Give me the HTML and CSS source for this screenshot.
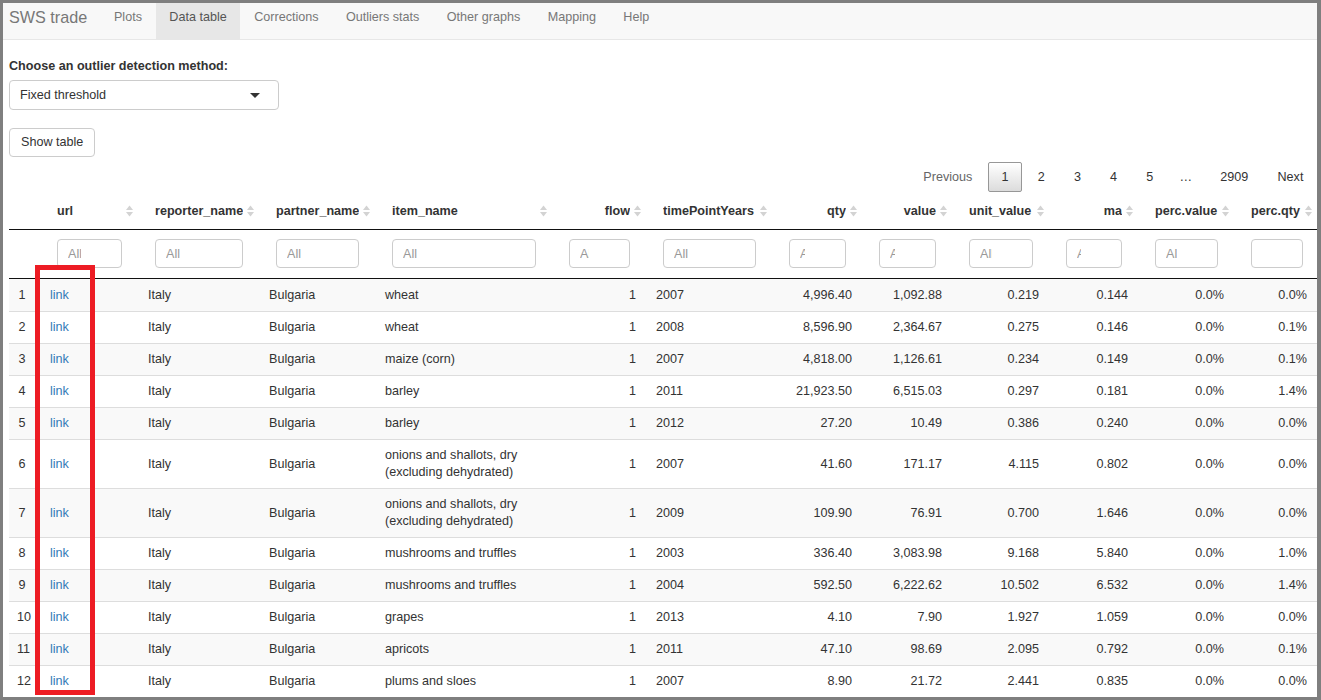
FILE: index.html
```html
<!DOCTYPE html>
<html>
<head>
<meta charset="utf-8">
<link rel="stylesheet" href="styles.css">
</head>
<body>
<div class="frame">
  <nav class="navbar">
    <span class="brand">SWS trade</span>
    <ul class="nav">
      <li><a>Plots</a></li>
      <li class="active"><a>Data table</a></li>
      <li><a>Corrections</a></li>
      <li><a>Outliers stats</a></li>
      <li><a>Other graphs</a></li>
      <li><a>Mapping</a></li>
      <li><a>Help</a></li>
    </ul>
  </nav>
  <main class="content">
    <label class="ctl-label">Choose an outlier detection method:</label>
    <div class="select"><span>Fixed threshold</span><span class="caret"></span></div>
    <button class="btn">Show table</button>
    <div class="pager">
      <span class="pbtn disabled">Previous</span>
      <span class="pbtn current">1</span>
      <span class="pbtn">2</span>
      <span class="pbtn">3</span>
      <span class="pbtn">4</span>
      <span class="pbtn">5</span>
      <span class="ellipsis">…</span>
      <span class="pbtn">2909</span>
      <span class="pbtn">Next</span>
    </div>
    <table class="dt">
      <colgroup>
        <col class="w-idx"><col class="w-url"><col class="w-rep"><col class="w-par"><col class="w-item"><col class="w-flow"><col class="w-time"><col class="w-qty"><col class="w-val"><col class="w-unit"><col class="w-ma"><col class="w-pv"><col class="w-pq">
      </colgroup>
      <thead>
        <tr class="hdr">
          <th></th>
          <th><div class="hd"><span class="t">url</span><svg class="si" viewBox="0 0 7 12"><polygon points="0,5 3.5,0.5 7,5"/><polygon points="0,7 3.5,11.5 7,7"/></svg></div></th>
          <th><div class="hd"><span class="t">reporter_name</span><svg class="si" viewBox="0 0 7 12"><polygon points="0,5 3.5,0.5 7,5"/><polygon points="0,7 3.5,11.5 7,7"/></svg></div></th>
          <th><div class="hd"><span class="t">partner_name</span><svg class="si" viewBox="0 0 7 12"><polygon points="0,5 3.5,0.5 7,5"/><polygon points="0,7 3.5,11.5 7,7"/></svg></div></th>
          <th><div class="hd"><span class="t">item_name</span><svg class="si" viewBox="0 0 7 12"><polygon points="0,5 3.5,0.5 7,5"/><polygon points="0,7 3.5,11.5 7,7"/></svg></div></th>
          <th><div class="hd r"><span class="t">flow</span><svg class="si" viewBox="0 0 7 12"><polygon points="0,5 3.5,0.5 7,5"/><polygon points="0,7 3.5,11.5 7,7"/></svg></div></th>
          <th><div class="hd"><span class="t">timePointYears</span><svg class="si" viewBox="0 0 7 12"><polygon points="0,5 3.5,0.5 7,5"/><polygon points="0,7 3.5,11.5 7,7"/></svg></div></th>
          <th><div class="hd r"><span class="t">qty</span><svg class="si" viewBox="0 0 7 12"><polygon points="0,5 3.5,0.5 7,5"/><polygon points="0,7 3.5,11.5 7,7"/></svg></div></th>
          <th><div class="hd r"><span class="t">value</span><svg class="si" viewBox="0 0 7 12"><polygon points="0,5 3.5,0.5 7,5"/><polygon points="0,7 3.5,11.5 7,7"/></svg></div></th>
          <th><div class="hd"><span class="t">unit_value</span><svg class="si" viewBox="0 0 7 12"><polygon points="0,5 3.5,0.5 7,5"/><polygon points="0,7 3.5,11.5 7,7"/></svg></div></th>
          <th><div class="hd r"><span class="t">ma</span><svg class="si" viewBox="0 0 7 12"><polygon points="0,5 3.5,0.5 7,5"/><polygon points="0,7 3.5,11.5 7,7"/></svg></div></th>
          <th><div class="hd"><span class="t">perc.value</span><svg class="si" viewBox="0 0 7 12"><polygon points="0,5 3.5,0.5 7,5"/><polygon points="0,7 3.5,11.5 7,7"/></svg></div></th>
          <th><div class="hd"><span class="t">perc.qty</span><svg class="si" viewBox="0 0 7 12"><polygon points="0,5 3.5,0.5 7,5"/><polygon points="0,7 3.5,11.5 7,7"/></svg></div></th>
        </tr>
        <tr class="flt">
          <td></td>
          <td><input type="text" placeholder="All"></td>
          <td><input type="text" placeholder="All"></td>
          <td><input type="text" placeholder="All"></td>
          <td><input type="text" placeholder="All"></td>
          <td><input type="text" placeholder="All"></td>
          <td><input type="text" placeholder="All"></td>
          <td><input type="text" placeholder="All"></td>
          <td><input type="text" placeholder="All"></td>
          <td><input type="text" placeholder="All"></td>
          <td><input type="text" placeholder="All"></td>
          <td><input type="text" placeholder="All"></td>
          <td><input type="text" placeholder="All"></td>
        </tr>
      </thead>
      <tbody>
        <tr><td class="idx">1</td><td><a class="lnk">link</a></td><td>Italy</td><td>Bulgaria</td><td>wheat</td><td class="n">1</td><td>2007</td><td class="n">4,996.40</td><td class="n">1,092.88</td><td class="n">0.219</td><td class="n">0.144</td><td class="n">0.0%</td><td class="n">0.0%</td></tr>
        <tr><td class="idx">2</td><td><a class="lnk">link</a></td><td>Italy</td><td>Bulgaria</td><td>wheat</td><td class="n">1</td><td>2008</td><td class="n">8,596.90</td><td class="n">2,364.67</td><td class="n">0.275</td><td class="n">0.146</td><td class="n">0.0%</td><td class="n">0.1%</td></tr>
        <tr><td class="idx">3</td><td><a class="lnk">link</a></td><td>Italy</td><td>Bulgaria</td><td>maize (corn)</td><td class="n">1</td><td>2007</td><td class="n">4,818.00</td><td class="n">1,126.61</td><td class="n">0.234</td><td class="n">0.149</td><td class="n">0.0%</td><td class="n">0.1%</td></tr>
        <tr><td class="idx">4</td><td><a class="lnk">link</a></td><td>Italy</td><td>Bulgaria</td><td>barley</td><td class="n">1</td><td>2011</td><td class="n">21,923.50</td><td class="n">6,515.03</td><td class="n">0.297</td><td class="n">0.181</td><td class="n">0.0%</td><td class="n">1.4%</td></tr>
        <tr><td class="idx">5</td><td><a class="lnk">link</a></td><td>Italy</td><td>Bulgaria</td><td>barley</td><td class="n">1</td><td>2012</td><td class="n">27.20</td><td class="n">10.49</td><td class="n">0.386</td><td class="n">0.240</td><td class="n">0.0%</td><td class="n">0.0%</td></tr>
        <tr><td class="idx">6</td><td><a class="lnk">link</a></td><td>Italy</td><td>Bulgaria</td><td>onions and shallots, dry (excluding dehydrated)</td><td class="n">1</td><td>2007</td><td class="n">41.60</td><td class="n">171.17</td><td class="n">4.115</td><td class="n">0.802</td><td class="n">0.0%</td><td class="n">0.0%</td></tr>
        <tr><td class="idx">7</td><td><a class="lnk">link</a></td><td>Italy</td><td>Bulgaria</td><td>onions and shallots, dry (excluding dehydrated)</td><td class="n">1</td><td>2009</td><td class="n">109.90</td><td class="n">76.91</td><td class="n">0.700</td><td class="n">1.646</td><td class="n">0.0%</td><td class="n">0.0%</td></tr>
        <tr><td class="idx">8</td><td><a class="lnk">link</a></td><td>Italy</td><td>Bulgaria</td><td>mushrooms and truffles</td><td class="n">1</td><td>2003</td><td class="n">336.40</td><td class="n">3,083.98</td><td class="n">9.168</td><td class="n">5.840</td><td class="n">0.0%</td><td class="n">1.0%</td></tr>
        <tr><td class="idx">9</td><td><a class="lnk">link</a></td><td>Italy</td><td>Bulgaria</td><td>mushrooms and truffles</td><td class="n">1</td><td>2004</td><td class="n">592.50</td><td class="n">6,222.62</td><td class="n">10.502</td><td class="n">6.532</td><td class="n">0.0%</td><td class="n">1.4%</td></tr>
        <tr><td class="idx">10</td><td><a class="lnk">link</a></td><td>Italy</td><td>Bulgaria</td><td>grapes</td><td class="n">1</td><td>2013</td><td class="n">4.10</td><td class="n">7.90</td><td class="n">1.927</td><td class="n">1.059</td><td class="n">0.0%</td><td class="n">0.0%</td></tr>
        <tr><td class="idx">11</td><td><a class="lnk">link</a></td><td>Italy</td><td>Bulgaria</td><td>apricots</td><td class="n">1</td><td>2011</td><td class="n">47.10</td><td class="n">98.69</td><td class="n">2.095</td><td class="n">0.792</td><td class="n">0.0%</td><td class="n">0.1%</td></tr>
        <tr><td class="idx">12</td><td><a class="lnk">link</a></td><td>Italy</td><td>Bulgaria</td><td>plums and sloes</td><td class="n">1</td><td>2007</td><td class="n">8.90</td><td class="n">21.72</td><td class="n">2.441</td><td class="n">0.835</td><td class="n">0.0%</td><td class="n">0.0%</td></tr>
      </tbody>
    </table>
  </main>
  <div class="highlight"></div>
</div>
</body>
</html>
```
FILE: styles.css
```css
* { box-sizing: border-box; }
html, body { margin: 0; padding: 0; background: #fff; }
body {
  font-family: "Liberation Sans", Arial, sans-serif;
  font-size: 12.6px;
  color: #333;
}
.frame {
  width: 1321px;
  height: 700px;
  border-style: solid;
  border-color: #7f7f7f;
  border-width: 3px 4px 3px 3px;
  overflow: hidden;
  position: relative;
  background: #fff;
}
.navbar {
  height: 37px;
  background: #f8f8f8;
  border-bottom: 1px solid #e7e7e7;
  display: flex;
  align-items: stretch;
}
.brand {
  padding: 5px 13px 0 6px;
  font-size: 16.2px;
  line-height: 18px;
  color: #777;
}
.nav {
  list-style: none;
  margin: 0;
  padding: 0;
  display: flex;
}
.nav li { display: flex; }
.nav a {
  display: block;
  padding: 5px 13.7px 0;
  line-height: 18px;
  color: #777;
  text-decoration: none;
}
.nav .active { background: #e7e7e7; }
.nav .active a { color: #555; }

.content { padding: 17px 0 0 6px; }
.ctl-label {
  display: block;
  font-weight: bold;
  line-height: 18px;
  margin-bottom: 5px;
}
.select {
  width: 270px;
  height: 30px;
  border: 1px solid #ccc;
  border-radius: 4px;
  padding: 0 18px 0 10px;
  display: flex;
  align-items: center;
  justify-content: space-between;
  line-height: 18px;
  margin-bottom: 18px;
  background: #fff;
}
.caret {
  width: 0;
  height: 0;
  border-style: solid;
  border-width: 5px 5px 0 5px;
  border-color: #333 transparent transparent transparent;
}
.btn {
  display: block;
  height: 29px;
  padding: 0 11px;
  border: 1px solid #ccc;
  border-radius: 4px;
  background: #fff;
  font: inherit;
  color: #333;
  line-height: 17px;
  margin-bottom: 5px;
}
.pager {
  height: 30px;
  display: flex;
  justify-content: flex-end;
  align-items: center;
}
.pbtn {
  height: 30px;
  line-height: 28px;
  padding: 0 12.6px;
  border: 1px solid transparent;
  border-radius: 2px;
  margin-left: 2px;
  color: #333;
}
.pbtn.disabled { color: #666; }
.pbtn.current {
  border-color: #979797;
  background: linear-gradient(to bottom, #fff 0%, #dcdcdc 100%);
}
.ellipsis {
  padding: 0 12.6px;
  line-height: 28px;
  color: #333;
}

.dt {
  width: 1308px;
  table-layout: fixed;
  border-collapse: collapse;
  border-spacing: 0;
}
.w-idx { width: 31px; }
.w-url { width: 98px; }
.w-rep { width: 121px; }
.w-par { width: 116px; }
.w-item { width: 177px; }
.w-flow { width: 94px; }
.w-time { width: 126px; }
.w-qty { width: 90px; }
.w-val { width: 90px; }
.w-unit { width: 97px; }
.w-ma { width: 89px; }
.w-pv { width: 96px; }
.w-pq { width: 83px; }

.hdr th {
  padding: 10px 5px 9px 17px;
  line-height: 18px;
  font-weight: bold;
  text-align: left;
  border-bottom: 1px solid #111;
  white-space: nowrap;
}
.hd {
  display: flex;
  align-items: center;
  gap: 4px;
}
.hd .t { flex: 1; overflow: hidden; }
.hd.r .t { text-align: right; }
.si {
  width: 7px;
  height: 12px;
  flex: none;
  fill: #d3d3d3;
}
.flt td {
  padding: 9px 16px 10px 17px;
  border-bottom: 1px solid #111;
}
.flt input {
  display: block;
  width: 100%;
  height: 29px;
  border: 1px solid #ccc;
  border-radius: 4px;
  padding: 0 40px 0 10px;
  font: inherit;
  color: #555;
  background: #fff;
}
.flt input::placeholder { color: #999; }

.dt tbody td {
  padding: 7px 10px;
  line-height: 17px;
  border-top: 1px solid #ddd;
  vertical-align: middle;
}
.dt tbody tr:first-child td { border-top: none; padding-top: 8px; }
.dt tbody tr:nth-child(odd) { background: #f9f9f9; }
.dt tbody td.n { text-align: right; }
.dt tbody td.idx { text-align: center; padding-left: 8px; padding-right: 13px; }
.lnk { color: #337ab7; text-decoration: none; }

.highlight {
  position: absolute;
  left: 32px;
  top: 262px;
  width: 60px;
  height: 430px;
  border: 5px solid #ed1c24;
}
```
